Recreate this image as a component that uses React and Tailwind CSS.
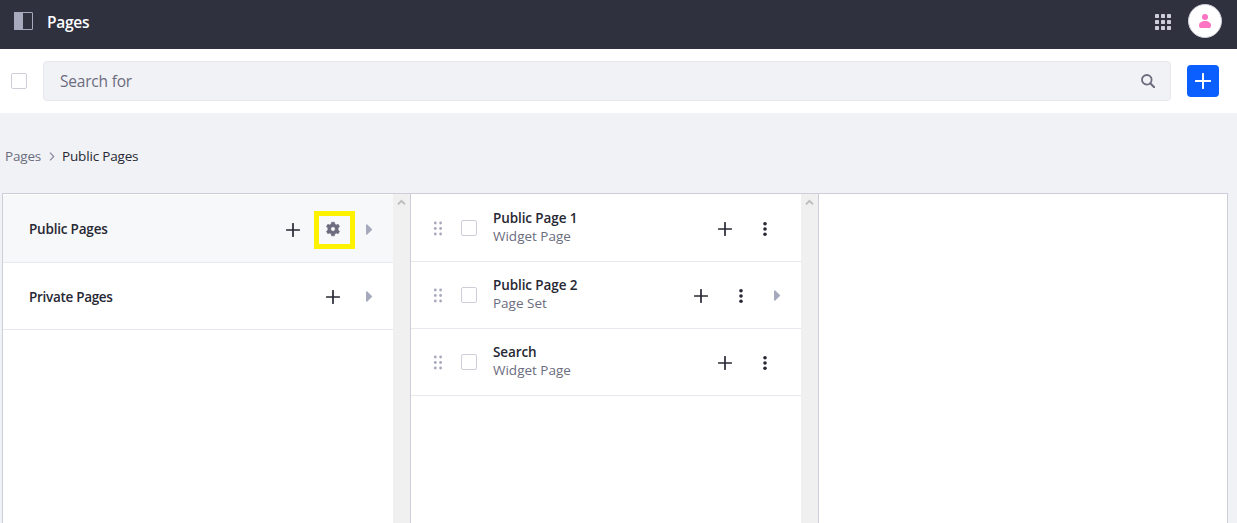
import React from "react";

function Plus({ className = "text-[#272833]", size = 14 }) {
  return (
    <svg width={size} height={size} viewBox="0 0 14 14" className={`shrink-0 ${className}`} fill="none" stroke="currentColor" strokeWidth="1.7" strokeLinecap="round">
      <path d="M7 0.7V13.3M0.7 7H13.3" />
    </svg>
  );
}

function Caret() {
  return (
    <svg width="7" height="11" viewBox="0 0 7 11" className="shrink-0 text-[#a7a9bc]" fill="currentColor">
      <path d="M0 0.8Q0.3 0 1.3 0.6L5.900 4.900Q6.400 5.500 5.900 6.100L1.300 10.400Q0.300 11 0 10.200Z" />
    </svg>
  );
}

function Kebab() {
  return (
    <svg width="4" height="14" viewBox="0 0 4 14" className="shrink-0 text-[#272833]" fill="currentColor">
      <circle cx="2" cy="1.8" r="1.8" />
      <circle cx="2" cy="7" r="1.8" />
      <circle cx="2" cy="12.2" r="1.8" />
    </svg>
  );
}

function Drag() {
  return (
    <svg width="9" height="15" viewBox="0 0 9 15" className="shrink-0 text-[#a7a9bc]" fill="currentColor">
      <circle cx="2.3" cy="2" r="1.4" />
      <circle cx="7.600" cy="2" r="1.4" />
      <circle cx="2.3" cy="7.5" r="1.4" />
      <circle cx="7.600" cy="7.5" r="1.4" />
      <circle cx="2.3" cy="13" r="1.4" />
      <circle cx="7.600" cy="13" r="1.4" />
    </svg>
  );
}

function Gear() {
  return (
    <svg width="16" height="16" viewBox="0 0 16 16" className="shrink-0 text-[#6b6c7e]">
      <path
        fill="currentColor"
        fillRule="evenodd"
        stroke="currentColor"
        strokeWidth="0.6"
        strokeLinejoin="round"
        d="M6.6 1.200h2.8l.5 2 1.3.75 2-.6 1.300 2.200L13.100 7v2l1.400 1.450-1.300 2.200-2-.6-1.3.75-.5 2H6.6l-.5-2-1.3-.75-2 .6-1.300-2.200L2.900 9V7L1.500 5.550l1.300-2.200 2 .6L6.100 3.200ZM8 5.700a2.300 2.300 0 1 0 0 4.600 2.300 2.300 0 0 0 0-4.600Z"
      />
    </svg>
  );
}

function Checkbox() {
  return <span className="block size-4 shrink-0 rounded-[2px] border border-[#cdced9] bg-white" />;
}

function Scrollbar() {
  return (
    <div className="flex w-[17px] shrink-0 justify-center bg-[#f0f0f0] pt-[5px]">
      <svg width="9" height="7" viewBox="0 0 9 7" fill="none" stroke="#bdbdbd" strokeWidth="2">
        <path d="M1 5.4L4.5 1.9L8 5.4" />
      </svg>
    </div>
  );
}

function PageRow({ title, type, expandable }) {
  return (
    <div className="flex h-[67px] items-center border-b border-[#e7e7ed] pl-[22px]">
      <Drag />
      <span className="ml-[19px]">
        <Checkbox />
      </span>
      <div className="ml-4 flex-1 pb-[2px] text-[13.5px] leading-[18px]">
        <div className="font-semibold tracking-[-0.1px] text-[#272833]">{title}</div>
        <div className="text-[#6b6c7e]">{type}</div>
      </div>
      <div className={`flex items-center gap-[31px] pt-px ${expandable ? "pr-[21px]" : "pr-[34px]"}`}>
        <Plus />
        <Kebab />
      </div>
      {expandable && (
        <div className="mr-[20px] ml-[10px]">
          <Caret />
        </div>
      )}
    </div>
  );
}

export default function App() {
  return (
    <div className="flex h-[523px] w-[1237px] flex-col overflow-hidden bg-[#f1f2f5] font-['Open_Sans','Noto_Sans',sans-serif]">
      <header className="flex h-[49px] shrink-0 items-center bg-[#30313f] pr-[15px] pb-[5px] pl-[14px]">
        <svg width="19" height="18" viewBox="0 0 19 18" className="-mt-[2px] shrink-0">
          <path d="M0 0H9V18H0Z" fill="#a7a9bc" />
          <rect x="0.5" y="0.5" width="18" height="17" rx="0.5" fill="none" stroke="#a7a9bc" />
        </svg>
        <h1 className="ml-[14px] text-[15.5px] leading-5 font-semibold tracking-[-0.25px] text-white">Pages</h1>
        <svg width="16" height="16" viewBox="0 0 16 16" className="ml-auto shrink-0" fill="#cdced9">
          {[0, 6, 12].map((y) => [0, 6, 12].map((x) => <rect key={`${x}-${y}`} x={x} y={y} width="4" height="4" rx="0.4" />))}
        </svg>
        <div className="-mt-[2px] ml-[17px] flex size-[34px] items-center justify-center rounded-full border border-[#cdced9] bg-white">
          <svg width="12" height="14" viewBox="0 0 12 14" fill="#ff73c3">
            <circle cx="6" cy="3" r="3" />
            <path d="M0 11.5C0 8.5 2.6 7 6 7s6 1.500 6 4.500C12 13.400 10.800 14 9.800 14H2.200C1.200 14 0 13.400 0 11.500Z" />
          </svg>
        </div>
      </header>

      <div className="flex h-16 shrink-0 items-center bg-white pr-[18px] pl-[11px]">
        <Checkbox />
        <div className="ml-4 flex h-10 flex-1 items-center justify-between rounded-[4px] border border-[#e7e7ed] bg-[#f1f2f5] pr-[15px] pl-4">
          <span className="text-[15.5px] leading-6 tracking-[-0.2px] text-[#6b6c7e]">Search for</span>
          <svg width="14" height="14" viewBox="0 0 14 14" fill="none" stroke="#6b6c7e" strokeWidth="1.800">
            <circle cx="5.800" cy="5.800" r="4.800" />
            <path d="M9.200 9.200L13.200 13.200" strokeWidth="2" strokeLinecap="round" />
          </svg>
        </div>
        <div className="ml-4 flex size-8 items-center justify-center rounded-[4px] bg-[#0b5fff]">
          <Plus className="text-white" size={16} />
        </div>
      </div>

      <nav className="flex h-20 shrink-0 items-center pt-[6px] pl-[5px] text-[13.5px] leading-5 tracking-[-0.18px]">
        <span className="text-[#6b6c7e]">Pages</span>
        <svg width="6" height="9" viewBox="0 0 6 9" className="mr-[7px] ml-2 shrink-0" fill="none" stroke="#8c8ea2" strokeWidth="1.300">
          <path d="M1 0.600L4.700 4.500L1 8.400" />
        </svg>
        <span className="text-[#272833]">Public Pages</span>
      </nav>

      <main className="mr-[9px] ml-[2px] flex min-h-0 flex-1 border-x border-t border-[#cdced9] bg-white">
        <section className="flex w-[408px] shrink-0 border-r border-[#cdced9]">
          <div className="flex-1 pt-px text-[13.5px] font-semibold tracking-[-0.2px] text-[#272833]">
            <div className="flex h-[68px] items-center border-b border-[#e7e7ed] bg-[#f7f8f9] pr-[20px] pl-[26px]">
              <span className="flex-1 pt-[2px]">Public Pages</span>
              <span className="mr-[14px] pt-[2px]">
                <Plus />
              </span>
              <span className="mt-[2px] mr-[11px] flex h-[38px] w-[41px] items-center justify-center border-[5px] border-[#fff200] pr-[3px] pb-[2px]">
                <Gear />
              </span>
              <span className="pt-px">
                <Caret />
              </span>
            </div>
            <div className="flex h-[67px] items-center border-b border-[#e7e7ed] pr-[20px] pl-[26px]">
              <span className="flex-1 pt-[2px] tracking-[-0.3px]">Private Pages</span>
              <span className="mr-[26px] pt-[2px]">
                <Plus />
              </span>
              <Caret />
            </div>
          </div>
          <Scrollbar />
        </section>
        <section className="flex w-[408px] shrink-0 border-r border-[#cdced9]">
          <div className="flex-1 pt-px">
            <PageRow title="Public Page 1" type="Widget Page" />
            <PageRow title="Public Page 2" type="Page Set" expandable />
            <PageRow title="Search" type="Widget Page" />
          </div>
          <Scrollbar />
        </section>
        <section className="flex-1" />
      </main>
    </div>
  );
}
